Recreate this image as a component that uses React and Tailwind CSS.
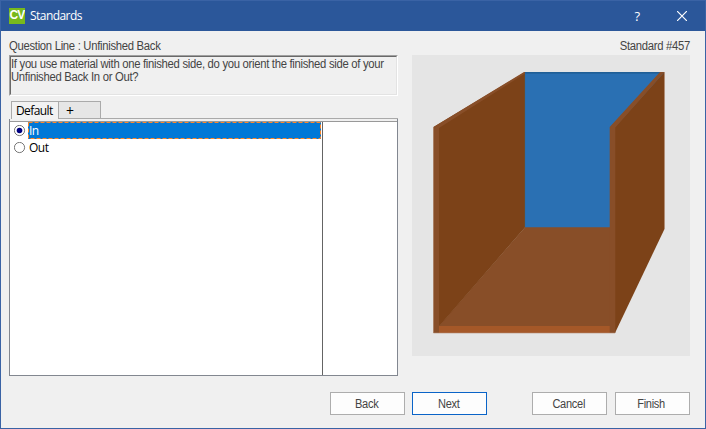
import React from "react";

const label = "font-['Liberation_Sans',Arial,sans-serif] text-[12px] leading-[13px] text-[#444] whitespace-nowrap tracking-[-0.31px]";

function TitleBar() {
  return (
    <header className="flex h-[30px] shrink-0 items-center bg-[#2b579a] pl-2 text-white">
      <div className="flex h-4 w-4 items-center justify-center overflow-hidden bg-[#78b91c] pb-px font-['Liberation_Sans',sans-serif] text-[12px] font-bold leading-[15px] tracking-[-0.9px]">CV</div>
      <h1 className="ml-[5px] font-['Open_Sans',sans-serif] text-[12px] leading-4 tracking-[-0.55px]">Standards</h1>
      <span className="ml-auto mr-[37px] font-['Open_Sans',sans-serif] text-[13px] leading-4">?</span>
      <svg className="mr-[18px] h-[10px] w-[10px]" viewBox="0 0 10 10" stroke="#fff" strokeWidth="1.2">
        <path d="M0 0L10 10M10 0L0 10" />
      </svg>
    </header>
  );
}

function Option({ text, selected }) {
  return (
    <div className="flex h-[17px] items-center">
      <svg className="ml-[4px] mr-[2px] h-3 w-3 shrink-0" viewBox="0 0 12 12">
        <circle cx="5.5" cy="5.5" r="5.1" fill="#fff" stroke="#555" strokeWidth="0.8" />
        {selected && <circle cx="5.5" cy="5.5" r="2.8" fill="#000080" />}
      </svg>
      <div className={selected ? "relative h-[17px] w-[293px] bg-[#0078d7] text-white" : "h-[17px] w-[293px] text-black"}>
        <span className="block pl-px font-['Open_Sans',sans-serif] text-[12px] leading-[17px] tracking-[-0.5px]">{text}</span>
        {selected && (
          <svg className="absolute inset-0 h-[17px] w-[293px]" viewBox="0 0 293 17">
            <rect x="0.5" y="0.5" width="292" height="16" fill="none" stroke="#ff8728" strokeDasharray="4 2" />
          </svg>
        )}
      </div>
    </div>
  );
}

function Cabinet() {
  return (
    <svg className="mt-px block h-[301px] w-[278px] bg-[#e5e5e5]" viewBox="412 55 278 301">
      <rect x="525" y="72" width="139" height="156" fill="#2a70b3" />
      <rect x="525" y="72" width="136" height="1.6" fill="#205f96" />
      <path d="M525 227.3H610.5V327H438Z" fill="#884e28" />
      <path d="M433.5 127L525 72V227.5L439 326.5V333H433.5Z" fill="#7c4218" />
      <path d="M433.5 127L524 72H525V73.5L439 128V333H433.5Z" fill="#884e28" />
      <rect x="439" y="326" width="171" height="7" fill="#a55828" />
      <path d="M615 127L664.5 72V229L615 333Z" fill="#7c4218" />
      <path d="M609.7 127L660 72H664.5L615.3 127.5V333H609.7Z" fill="#884e28" />
      <path d="M433.5 127V333H615" fill="none" stroke="#b28c74" strokeWidth="0.6" />
      <path d="M664.5 72V229" stroke="#b28c74" strokeWidth="0.7" />
      <path d="M524.6 74V227" stroke="#63523a" strokeWidth="0.7" />
    </svg>
  );
}

function Button({ children, className = "" }) {
  return (
    <button className={"h-[23px] w-[75px] border bg-[#fdfdfd] pr-[2px] pt-px text-center " + label + " " + className}>
      <span className="inline-block scale-x-[0.92]">{children}</span>
    </button>
  );
}

export default function App() {
  return (
    <div className="flex h-[429px] w-[706px] flex-col overflow-hidden border border-[#3a63a5] bg-[#f0f0f0]">
      <TitleBar />
      <main className="flex h-[325px] shrink-0 pl-2 pt-2">
        <section className="w-[389px]">
          <div className={label + " h-4 origin-left scale-x-[0.94] pt-[1px]"}>Question Line : Unfinished Back</div>
          <div className="h-[41px] border-b border-l border-r border-t border-b-white border-l-[#a0a0a0] border-r-white border-t-[#a0a0a0]">
            <div className={label + " h-[39px] border border-b-[#e3e3e3] border-l-[#696969] border-r-[#e3e3e3] border-t-[#696969] pt-px"}>
              <div className="origin-left scale-x-[0.94]">If you use material with one finished side, do you orient the finished side of your</div>
              <div className="origin-left scale-x-[0.94]">Unfinished Back In or Out?</div>
            </div>
          </div>
          <div className="mt-[5px] flex h-[18px] items-end pl-[2px] font-['Open_Sans',sans-serif] text-[12px] leading-[17px] tracking-[-0.6px] text-black">
            <div className="h-[18px] w-[48px] border-l border-r border-t border-[#aaa] bg-[#f2f2f2] pl-1">Default</div>
            <div className="h-[18px] w-[42px] border-b border-r border-t border-[#aaa] bg-[#e6e6e6] pl-[7px] text-[14px]">+</div>
            <div className="h-px flex-1 bg-[#aaa]" />
          </div>
          <div className="h-[257px] border-b border-l border-r border-[#828790] pt-[2px]">
            <div className="flex h-[254px] border-t border-[#999] bg-white">
              <div className="w-[313px] border-r border-[#646464]">
                <Option text="In" selected />
                <Option text="Out" />
              </div>
            </div>
          </div>
        </section>
        <aside className="ml-[14px] w-[278px]">
          <div className={label + " h-[15px] origin-right scale-x-[0.94] pt-[1px] text-right"}>Standard #457</div>
          <Cabinet />
        </aside>
      </main>
      <footer className="flex pl-[329px] pt-[36px]">
        <Button className="border-[#adadad]">Back</Button>
        <Button className="ml-[7px] border-[#0a64c8]">Next</Button>
        <Button className="ml-[45px] border-[#adadad]">Cancel</Button>
        <Button className="ml-2 border-[#adadad]">Finish</Button>
      </footer>
    </div>
  );
}
